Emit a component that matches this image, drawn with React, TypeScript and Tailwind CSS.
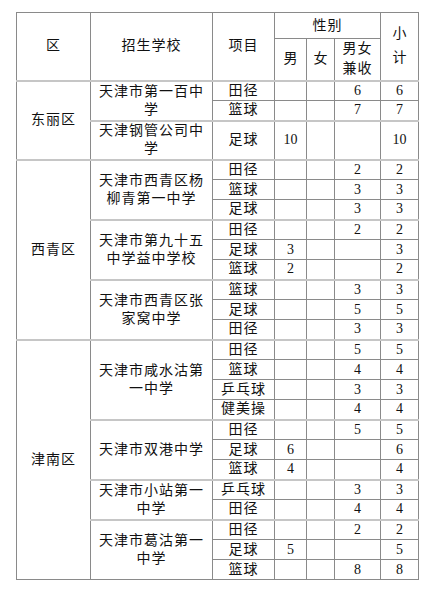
type Row = { item: string; male?: string; female?: string; mixed?: string; total: string };
type School = { name: string; rows: Row[]; tall?: boolean };
type District = { name: string; schools: School[] };

const data: District[] = [
  {
    name: "东丽区",
    schools: [
      {
        name: "天津市第一百中学",
        rows: [
          { item: "田径", mixed: "6", total: "6" },
          { item: "篮球", mixed: "7", total: "7" },
        ],
      },
      { name: "天津钢管公司中学", tall: true, rows: [{ item: "足球", male: "10", total: "10" }] },
    ],
  },
  {
    name: "西青区",
    schools: [
      {
        name: "天津市西青区杨柳青第一中学",
        rows: [
          { item: "田径", mixed: "2", total: "2" },
          { item: "篮球", mixed: "3", total: "3" },
          { item: "足球", mixed: "3", total: "3" },
        ],
      },
      {
        name: "天津市第九十五中学益中学校",
        rows: [
          { item: "田径", mixed: "2", total: "2" },
          { item: "足球", male: "3", total: "3" },
          { item: "篮球", male: "2", total: "2" },
        ],
      },
      {
        name: "天津市西青区张家窝中学",
        rows: [
          { item: "篮球", mixed: "3", total: "3" },
          { item: "足球", mixed: "5", total: "5" },
          { item: "田径", mixed: "3", total: "3" },
        ],
      },
    ],
  },
  {
    name: "津南区",
    schools: [
      {
        name: "天津市咸水沽第一中学",
        rows: [
          { item: "田径", mixed: "5", total: "5" },
          { item: "篮球", mixed: "4", total: "4" },
          { item: "乒乓球", mixed: "3", total: "3" },
          { item: "健美操", mixed: "4", total: "4" },
        ],
      },
      {
        name: "天津市双港中学",
        rows: [
          { item: "田径", mixed: "5", total: "5" },
          { item: "足球", male: "6", total: "6" },
          { item: "篮球", male: "4", total: "4" },
        ],
      },
      {
        name: "天津市小站第一中学",
        rows: [
          { item: "乒乓球", mixed: "3", total: "3" },
          { item: "田径", mixed: "4", total: "4" },
        ],
      },
      {
        name: "天津市葛沽第一中学",
        rows: [
          { item: "田径", mixed: "2", total: "2" },
          { item: "足球", male: "5", total: "5" },
          { item: "篮球", mixed: "8", total: "8" },
        ],
      },
    ],
  },
];

const cell = "border border-[#8a8a8a] p-0 text-center align-middle";
const sep = "border-t-2 border-t-[#c6c6c6]";

export default function App() {
  return (
    <div className="bg-white w-[439px] h-[591px] pt-[12px] pl-[16px] text-[14px] leading-[18px] text-[#111] font-['Liberation_Serif','Noto_Sans_CJK_SC',serif]">
      <table className="border-collapse table-fixed w-[403px]">
        <colgroup>
          <col className="w-[74px]" />
          <col className="w-[122px]" />
          <col className="w-[62px]" />
          <col className="w-[32px]" />
          <col className="w-[28px]" />
          <col className="w-[46px]" />
          <col className="w-[38px]" />
        </colgroup>
        <thead>
          <tr className="h-[26px]">
            <th rowSpan={2} className={`${cell} font-normal tracking-[1px]`}>区</th>
            <th rowSpan={2} className={`${cell} font-normal tracking-[1px]`}>招生学校</th>
            <th rowSpan={2} className={`${cell} font-normal tracking-[1px]`}>项目</th>
            <th colSpan={3} className={`${cell} font-normal tracking-[1px]`}>性别</th>
            <th rowSpan={2} className={`${cell} font-normal px-[10px] leading-[24px]`}>小计</th>
          </tr>
          <tr className="h-[42px]">
            <th className={`${cell} font-normal`}>男</th>
            <th className={`${cell} font-normal`}>女</th>
            <th className={`${cell} font-normal px-[7px] leading-[20px] tracking-[1px]`}>男女兼收</th>
          </tr>
        </thead>
        <tbody>
          {data.map((d) =>
            d.schools.map((s, si) =>
              s.rows.map((r, ri) => {
                const top = ri === 0 ? sep : "";
                return (
                  <tr key={d.name + s.name + r.item + ri} className={s.tall ? "h-[39px]" : "h-[20px]"}>
                    {si === 0 && ri === 0 && (
                      <td
                        rowSpan={d.schools.reduce((n, x) => n + x.rows.length, 0)}
                        className={`${cell} ${sep} tracking-[1px]`}
                      >
                        {d.name}
                      </td>
                    )}
                    {ri === 0 && (
                      <td rowSpan={s.rows.length} className={`${cell} ${sep} px-[6px] tracking-[1px]`}>
                        {s.name}
                      </td>
                    )}
                    <td className={`${cell} ${top} tracking-[1px]`}>{r.item}</td>
                    <td className={`${cell} ${top}`}>{r.male}</td>
                    <td className={`${cell} ${top}`}>{r.female}</td>
                    <td className={`${cell} ${top}`}>{r.mixed}</td>
                    <td className={`${cell} ${top}`}>{r.total}</td>
                  </tr>
                );
              })
            )
          )}
        </tbody>
      </table>
    </div>
  );
}
